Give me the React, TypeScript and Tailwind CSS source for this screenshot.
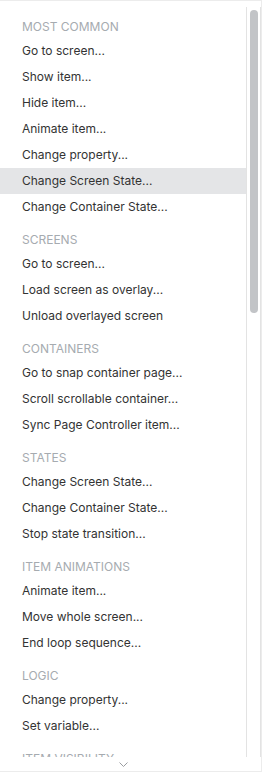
import React from "react";

const SECTIONS = [
  {
    title: "Most common",
    items: [
      "Go to screen...",
      "Show item...",
      "Hide item...",
      "Animate item...",
      "Change property...",
      "Change Screen State...",
      "Change Container State...",
    ],
  },
  {
    title: "Screens",
    items: ["Go to screen...", "Load screen as overlay...", "Unload overlayed screen"],
  },
  {
    title: "Containers",
    items: [
      "Go to snap container page...",
      "Scroll scrollable container...",
      "Sync Page Controller item...",
    ],
  },
  {
    title: "States",
    items: ["Change Screen State...", "Change Container State...", "Stop state transition..."],
  },
  {
    title: "Item animations",
    items: ["Animate item...", "Move whole screen...", "End loop sequence..."],
  },
  {
    title: "Logic",
    items: ["Change property...", "Set variable..."],
  },
  {
    title: "Item visibility",
    items: [],
  },
] as const;

const HIGHLIGHT = "Most common:5";

export default function App() {
  return (
    <div
      className="flex h-[772px] w-[262px] flex-col border-t border-r border-b border-[#ececec] bg-white pt-[6px] text-[12px] antialiased"
      style={{ fontFamily: "Inter, 'Noto Sans', sans-serif" }}
    >
      <div className="flex h-[750px] overflow-hidden">
        <div className="flex-1 overflow-hidden">
          {SECTIONS.map((section) => (
            <div key={section.title}>
              <div className="flex h-[31px] items-center pt-[8px] pl-[22px] text-[12px] uppercase text-[#a6abb0]">
                {section.title}
              </div>
              {section.items.map((item, i) => (
                <div
                  key={item}
                  className={
                    "flex h-[26px] items-center pl-[22px] text-[#333] " +
                    (`${section.title}:${i}` === HIGHLIGHT ? "bg-[#e4e5e7]" : "")
                  }
                >
                  {item}
                </div>
              ))}
            </div>
          ))}
        </div>
        <div className="flex w-[15px] justify-center border-l border-r border-[#e3e3e3] pt-[3px]">
          <div className="h-[303px] w-[8px] rounded-full bg-[#c2c4c7]" />
        </div>
      </div>
      <div className="flex h-[14px] w-[247px] items-start justify-center pt-[5px]">
        <svg width="9" height="5" viewBox="0 0 9 5" fill="none">
          <path d="M0.5 0.5 L4.5 4.5 L8.5 0.5" stroke="#9a9da1" strokeWidth="1" />
        </svg>
      </div>
    </div>
  );
}
